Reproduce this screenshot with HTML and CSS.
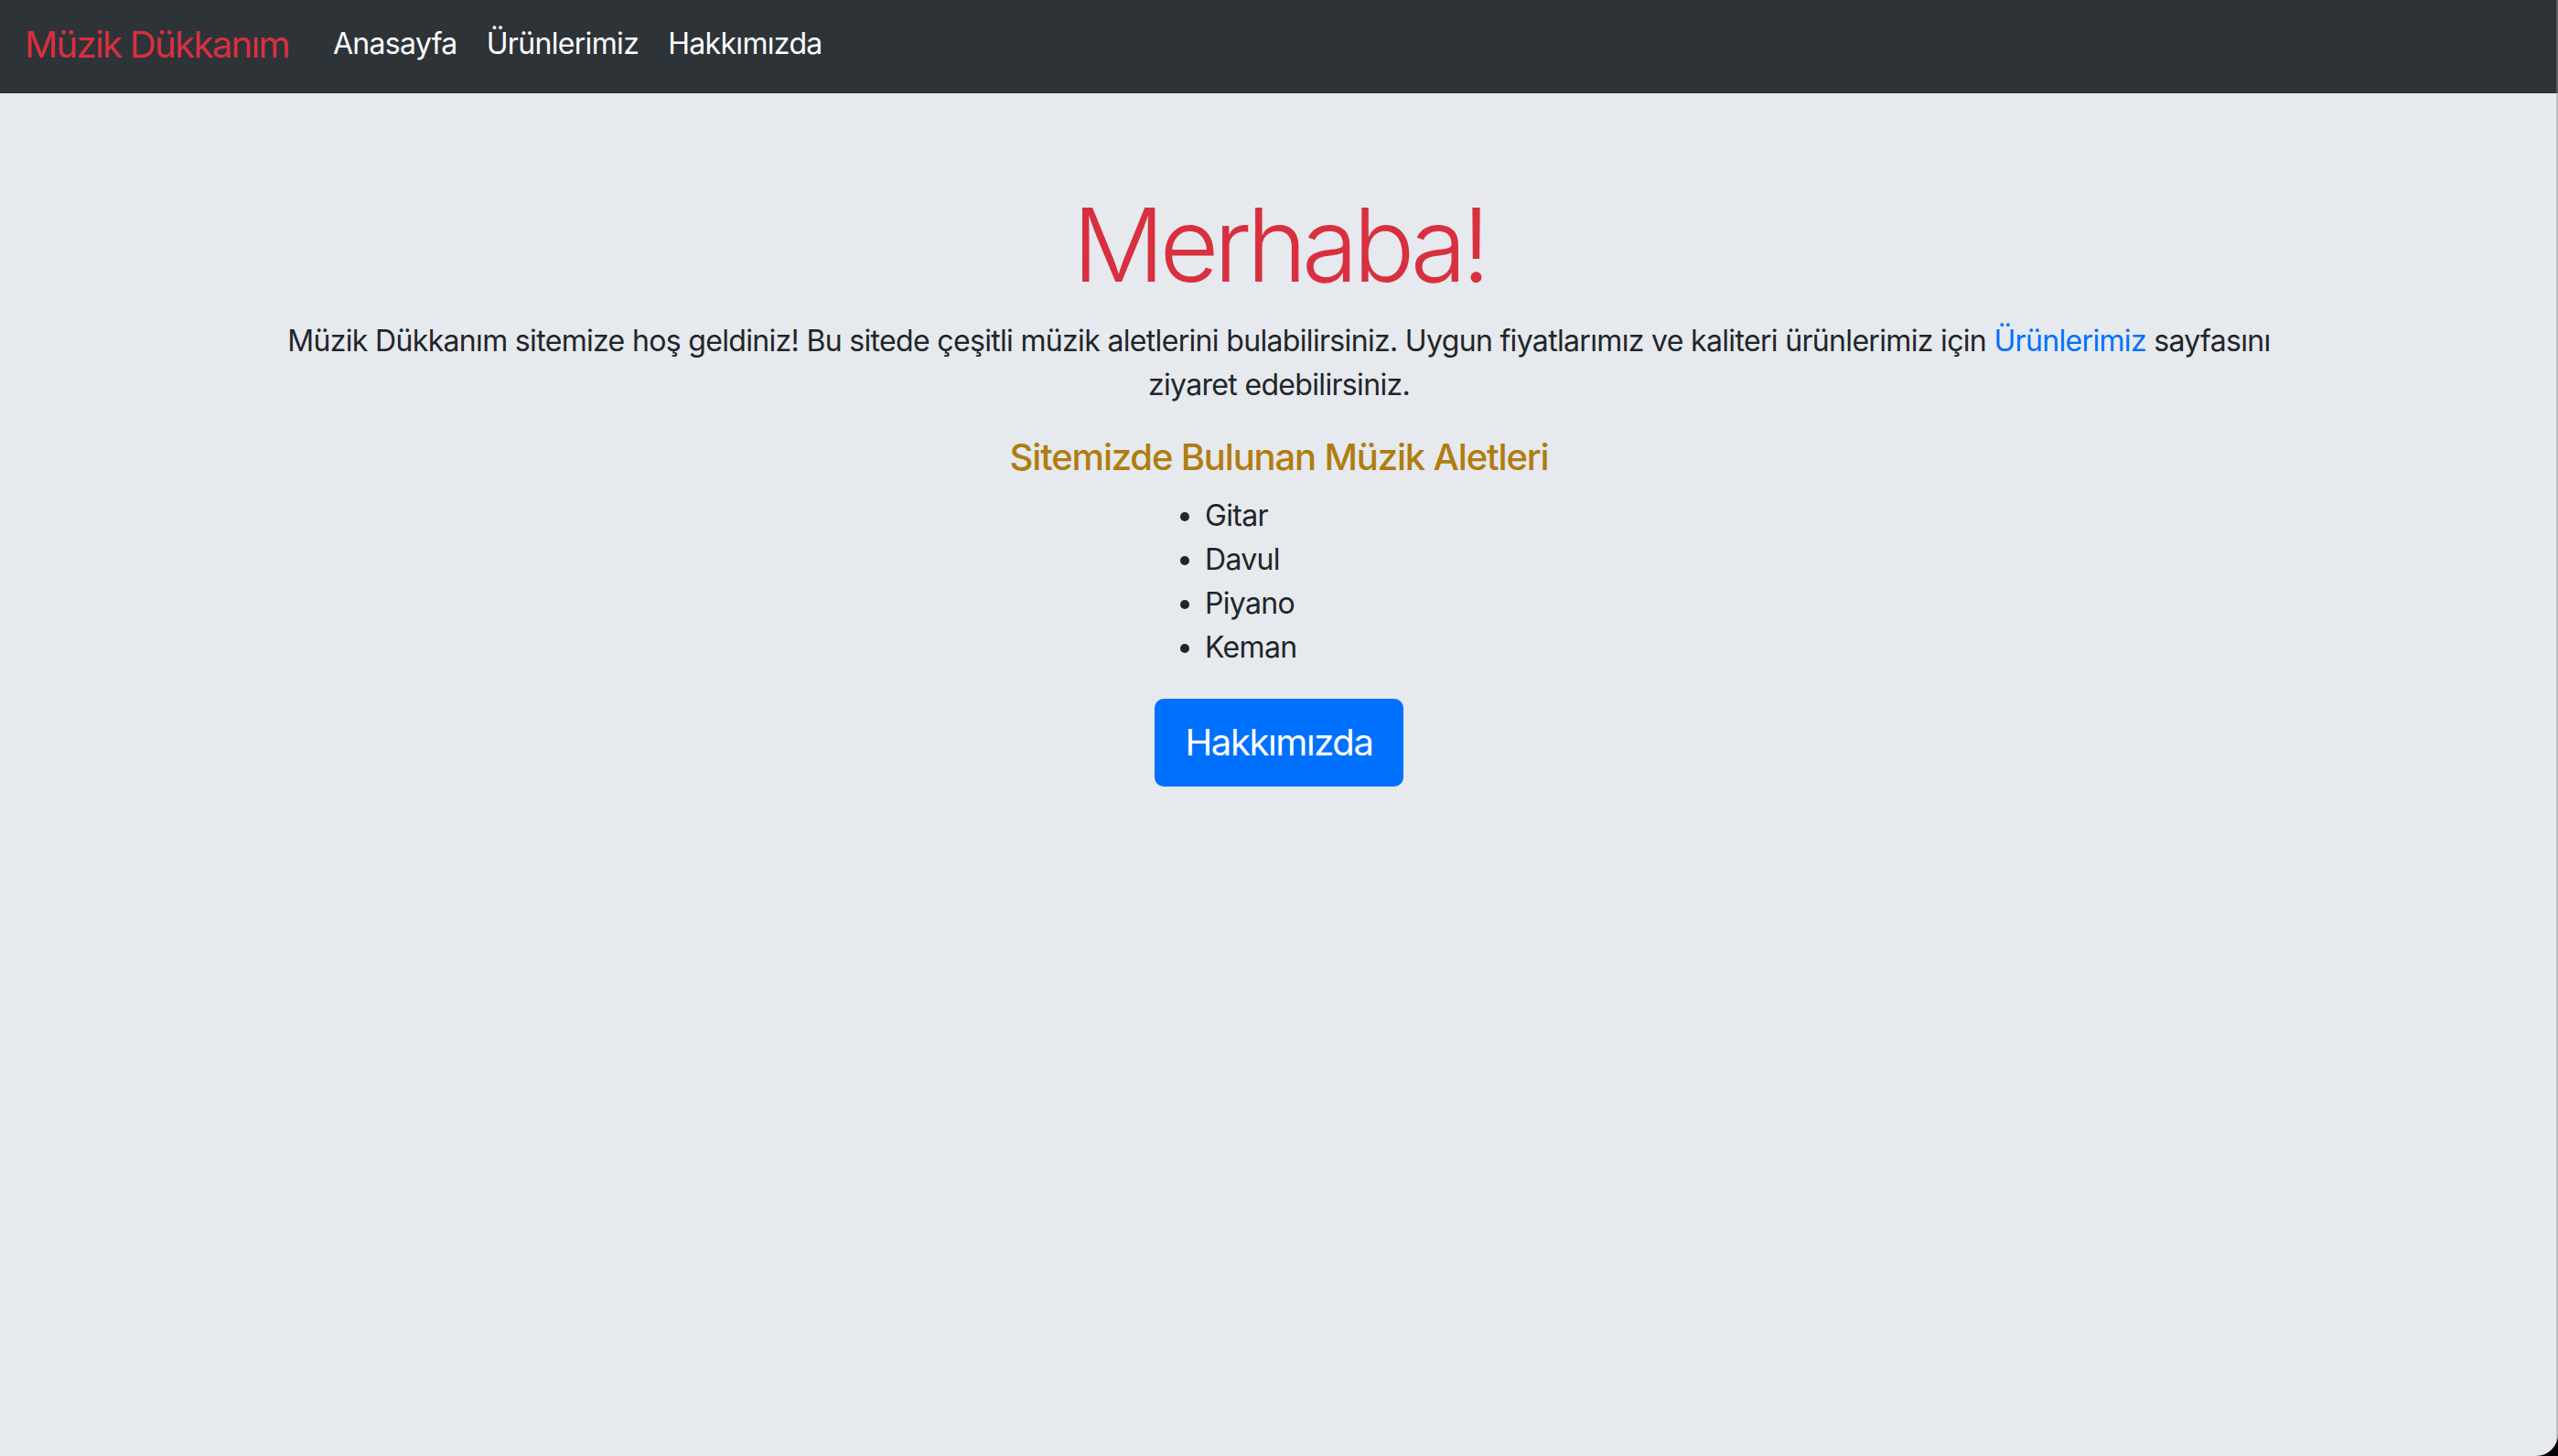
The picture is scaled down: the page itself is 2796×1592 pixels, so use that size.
FILE: index.html
```html
<!DOCTYPE html>
<html lang="tr">
<head>
<meta charset="utf-8">
<title>Müzik Dükkanım</title>
<link rel="stylesheet" href="styles.css">
</head>
<body>
<div class="page">
  <nav class="navbar">
    <a class="brand" href="#">Müzik Dükkanım</a>
    <ul class="nav">
      <li><a class="nav-link" href="#">Anasayfa</a></li>
      <li><a class="nav-link" href="#">Ürünlerimiz</a></li>
      <li><a class="nav-link" href="#">Hakkımızda</a></li>
    </ul>
  </nav>
  <main class="hero">
    <h1 class="title">Merhaba!</h1>
    <p class="lead-text">Müzik Dükkanım sitemize hoş geldiniz! Bu sitede çeşitli müzik aletlerini bulabilirsiniz. Uygun fiyatlarımız ve kaliteri ürünlerimiz için <a class="link" href="#">Ürünlerimiz</a> sayfasını ziyaret edebilirsiniz.</p>
    <h5 class="subtitle">Sitemizde Bulunan Müzik Aletleri</h5>
    <ul class="instruments">
      <li>Gitar</li>
      <li>Davul</li>
      <li>Piyano</li>
      <li>Keman</li>
    </ul>
    <a class="btn" href="#">Hakkımızda</a>
  </main>
</div>
</body>
</html>
```
FILE: styles.css
```css
html {
  background: #000;
}

body {
  margin: 0;
  font-family: Inter, "Noto Sans", "Liberation Sans", sans-serif;
  color: #212529;
  letter-spacing: -0.67px;
}

.page {
  position: relative;
  min-height: 1592px;
  background: #e6e9ed;
  border-bottom-right-radius: 24px;
  overflow: hidden;
}

.page::after {
  content: "";
  position: absolute;
  top: 0;
  right: 0;
  bottom: 0;
  width: 2px;
  background: rgba(140, 144, 150, 0.45);
  pointer-events: none;
}

.navbar {
  display: flex;
  align-items: flex-start;
  height: 102px;
  box-sizing: border-box;
  padding: 19px 30px 0 27px;
  background: #2e3338;
}

.brand {
  font-size: 40px;
  line-height: 60px;
  letter-spacing: -1.65px;
  color: #d8303f;
  text-decoration: none;
  margin-right: 32px;
}

.nav {
  display: flex;
  list-style: none;
  margin: 0;
  padding: 5px 0 0;
}

.nav-link {
  display: block;
  padding: 0 16px;
  font-size: 32px;
  line-height: 48px;
  color: #fff;
  text-decoration: none;
}

.hero {
  max-width: 2220px;
  margin: 0 auto;
  padding-top: 98px;
  text-align: center;
}

.title {
  margin: 0 0 15px;
  font-size: 112px;
  font-weight: 300;
  line-height: 134px;
  letter-spacing: -5.6px;
  color: #d8303f;
}

.lead-text {
  margin: 0 0 31px;
  font-size: 32px;
  line-height: 48px;
}

.link {
  color: #0071fe;
  text-decoration: none;
}

.subtitle {
  margin: 0 0 16px;
  font-size: 40px;
  font-weight: 500;
  line-height: 48px;
  letter-spacing: -1.16px;
  color: #b07c10;
}

.instruments {
  width: 242px;
  margin: 0 auto 32px;
  padding-left: 80px;
  text-align: left;
  font-size: 32px;
  line-height: 48px;
}

.btn {
  display: inline-block;
  padding: 16px 32px;
  font-size: 40px;
  line-height: 60px;
  letter-spacing: -1.4px;
  color: #fff;
  background: #0071fe;
  border: 2px solid #0071fe;
  border-radius: 10px;
  text-decoration: none;
}
```
